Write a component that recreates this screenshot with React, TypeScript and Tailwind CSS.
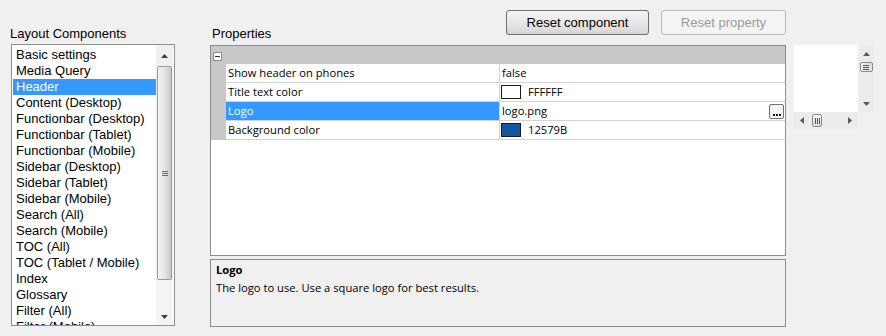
import React from "react";

const items = [
  "Basic settings",
  "Media Query",
  "Header",
  "Content (Desktop)",
  "Functionbar (Desktop)",
  "Functionbar (Tablet)",
  "Functionbar (Mobile)",
  "Sidebar (Desktop)",
  "Sidebar (Tablet)",
  "Sidebar (Mobile)",
  "Search (All)",
  "Search (Mobile)",
  "TOC (All)",
  "TOC (Tablet / Mobile)",
  "Index",
  "Glossary",
  "Filter (All)",
  "Filter (Mobile)",
];

function Tri({ dir, color = "#3c3c3c" }: { dir: "up" | "down" | "left" | "right"; color?: string }) {
  const pts: Record<string, string> = {
    up: "0,4 7,4 3.5,0",
    down: "0,0 7,0 3.5,4",
    left: "4,0 4,7 0,3.5",
    right: "0,0 0,7 4,3.5",
  };
  const vertical = dir === "up" || dir === "down";
  return (
    <svg
      className="block"
      width={vertical ? 7 : 4}
      height={vertical ? 4 : 7}
      viewBox={vertical ? "0 0 7 4" : "0 0 4 7"}
    >
      <polygon points={pts[dir]} fill={color} />
    </svg>
  );
}

function Row({
  name,
  selected,
  children,
}: {
  name: string;
  selected?: boolean;
  children: React.ReactNode;
}) {
  return (
    <div className="flex h-[19px]">
      <div className="w-[15px] bg-[#c8c8c8]" />
      <div
        className={
          "w-[274px] border-r border-b border-[#d3d3d3] pl-[2px] leading-[18px] whitespace-nowrap " +
          (selected ? "bg-[#3399ff] text-white" : "bg-white text-black")
        }
      >
        {name}
      </div>
      <div className="flex-1 border-b border-[#d3d3d3] bg-white flex items-center leading-[18px] text-black">
        {children}
      </div>
    </div>
  );
}

export default function App() {
  return (
    <div className="w-[886px] h-[336px] bg-[#f0f0f0] flex overflow-hidden font-['Liberation_Sans',Arial,sans-serif] text-[13px] text-black">
      {/* Left column */}
      <div className="ml-[10px] w-[165px] flex flex-col shrink-0">
        <div className="mt-[26px] h-[16px] leading-[16px] whitespace-nowrap">Layout Components</div>
        <div className="mt-[2px] ml-[1px] w-[164px] h-[282px] border border-[#8e8f8f] bg-white flex pr-[1px] overflow-hidden">
          <div className="w-[144px] pl-[1px] pt-[2px] overflow-hidden">
            {items.map((it, i) => (
              <div
                key={it}
                className={
                  "h-[16px] leading-[16px] pl-[3px] whitespace-nowrap " +
                  (i === 2 ? "bg-[#3399ff] text-white" : "")
                }
              >
                {it}
              </div>
            ))}
          </div>
          <div className="w-[17px] flex flex-col bg-[#f0f0f0]">
            <div className="h-[21px] flex items-center justify-center pt-[1px]">
              <Tri dir="up" />
            </div>
            <div className="h-[214px] mx-[1px] rounded-[2px] border border-[#9a9a9a] bg-linear-to-r from-[#f4f4f4] via-[#e4e4e4] to-[#c8c8c8] flex flex-col items-center justify-center gap-[1px]">
              <div className="w-[6px] h-[1px] bg-[#6c6c6c]" />
              <div className="w-[6px] h-[1px] bg-[#6c6c6c]" />
              <div className="w-[6px] h-[1px] bg-[#6c6c6c]" />
            </div>
            <div className="flex-1 bg-[#f4f4f4]" />
            <div className="h-[17px] flex items-center justify-center bg-[#f4f4f4]">
              <Tri dir="down" />
            </div>
          </div>
        </div>
      </div>

      {/* Middle column */}
      <div className="ml-[35px] w-[576px] flex flex-col shrink-0">
        <div className="h-[45px] pt-[10px] flex justify-between items-start">
          <div className="mt-[16px] h-[16px] leading-[16px] ml-[2px]">Properties</div>
          <div className="flex gap-[12px]">
            <div className="w-[143px] h-[25px] rounded-[3px] border border-[#707070] bg-linear-to-b from-[#f3f3f3] via-[#e8e8e8] to-[#d6d6d6] flex items-center justify-center leading-[15px]">
              Reset component
            </div>
            <div className="w-[125px] h-[25px] rounded-[3px] border border-[#b9b9b9] bg-[#f4f4f4] flex items-center justify-center leading-[15px] text-[#9a9a9a]">
              Reset property
            </div>
          </div>
        </div>

        {/* Property grid */}
        <div className="h-[211px] border border-[#8c8c8c] bg-white flex flex-col font-['Open_Sans',sans-serif] text-[11.2px]">
          <div className="h-[18px] bg-[#c8c8c8] pl-[2px] pt-[6px]">
            <div className="w-[9px] h-[9px] border border-[#8a8a8a] bg-white flex items-center justify-center">
              <div className="w-[5px] h-[1px] bg-[#333333]" />
            </div>
          </div>
          <Row name="Show header on phones">
            <span className="pl-[2px]">false</span>
          </Row>
          <Row name="Title text color">
            <div className="ml-[1px] w-[20px] h-[14px] border border-[#1a1a1a] bg-white" />
            <span className="ml-[7px]">FFFFFF</span>
          </Row>
          <Row name="Logo" selected>
            <span className="pl-[2px] flex-1">logo.png</span>
            <div className="mr-[1px] w-[15px] h-[15px] rounded-[2px] border border-[#707070] bg-[#f4f4f4] flex items-end justify-center gap-[1px] pb-[2px]">
              <div className="w-[2px] h-[2px] bg-[#111111]" />
              <div className="w-[2px] h-[2px] bg-[#111111]" />
              <div className="w-[2px] h-[2px] bg-[#111111]" />
            </div>
          </Row>
          <Row name="Background color">
            <div className="ml-[1px] w-[20px] h-[14px] border border-[#1a1a1a] bg-[#12579b]" />
            <span className="ml-[7px]">12579B</span>
          </Row>
          <div className="flex-1 bg-white" />
        </div>

        {/* Description */}
        <div className="mt-[3px] h-[68px] border border-[#8c8c8c] bg-[#f0f0f0] pl-[5px] pt-[1px] font-['Open_Sans',sans-serif] text-[11.2px] leading-[18px]">
          <div className="font-bold">Logo</div>
          <div>The logo to use. Use a square logo for best results.</div>
        </div>
      </div>

      {/* Right mini control */}
      <div className="ml-[8px] mt-[45px] flex flex-col shrink-0">
        <div className="flex">
          <div className="w-[64px] h-[67px] bg-white" />
          <div className="w-[16px] h-[67px] bg-[#ececec] flex flex-col">
            <div className="h-[17px] flex items-center justify-center">
              <Tri dir="up" color="#5a5a5a" />
            </div>
            <div className="mx-auto w-[13px] h-[10px] rounded-[2px] border border-[#8a8a8a] bg-linear-to-r from-[#f6f6f6] to-[#dcdcdc] flex flex-col items-center justify-center gap-[1px]">
              <div className="w-[6px] h-[1px] bg-[#555555]" />
              <div className="w-[6px] h-[1px] bg-[#555555]" />
              <div className="w-[6px] h-[1px] bg-[#555555]" />
            </div>
            <div className="flex-1" />
            <div className="h-[17px] flex items-center justify-center">
              <Tri dir="down" color="#5a5a5a" />
            </div>
          </div>
        </div>
        <div className="flex">
          <div className="w-[64px] h-[17px] bg-[#ececec] flex items-center">
            <div className="w-[16px] h-[17px] flex items-center justify-center">
              <Tri dir="left" color="#5a5a5a" />
            </div>
            <div className="ml-[2px] w-[10px] h-[13px] rounded-[2px] border border-[#8a8a8a] bg-linear-to-b from-[#f6f6f6] to-[#dcdcdc] flex items-center justify-center gap-[1px]">
              <div className="w-[1px] h-[6px] bg-[#555555]" />
              <div className="w-[1px] h-[6px] bg-[#555555]" />
              <div className="w-[1px] h-[6px] bg-[#555555]" />
            </div>
            <div className="flex-1" />
            <div className="w-[16px] h-[17px] flex items-center justify-center">
              <Tri dir="right" color="#5a5a5a" />
            </div>
          </div>
        </div>
      </div>
    </div>
  );
}
